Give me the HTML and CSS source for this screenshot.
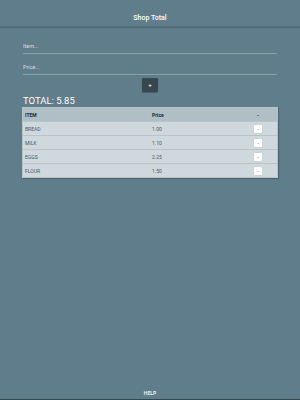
FILE: index.html
```html
<!DOCTYPE html>
<html>
<head>
<meta charset="utf-8">
<link rel="stylesheet" href="styles.css">
</head>
<body>
<div class="app">
  <header class="bar">Shop Total</header>
  <main class="content">
    <div class="field"><input class="inp" placeholder="Item..."></div>
    <div class="field"><input class="inp" placeholder="Price..."></div>
    <div class="add-row"><button class="add">+</button></div>
    <div class="total">TOTAL: 5.85</div>
    <div class="table">
      <div class="row head"><span class="c1">ITEM</span><span class="c2">Price</span><span class="c3">-</span></div>
      <div class="row"><span class="c1">BREAD</span><span class="c2">1.00</span><span class="c3"><button class="rm">-</button></span></div>
      <div class="row"><span class="c1">MILK</span><span class="c2">1.10</span><span class="c3"><button class="rm">-</button></span></div>
      <div class="row"><span class="c1">EGGS</span><span class="c2">2.25</span><span class="c3"><button class="rm">-</button></span></div>
      <div class="row"><span class="c1">FLOUR</span><span class="c2">1.50</span><span class="c3"><button class="rm">-</button></span></div>
    </div>
  </main>
  <footer class="foot">HELP</footer>
</div>
</body>
</html>
```
FILE: styles.css
```css
html, body {
  margin: 0;
  padding: 0;
  background: #607d8b;
  font-family: Roboto, "Liberation Sans", sans-serif;
}
.app {
  height: 400px;
  display: flex;
  flex-direction: column;
  box-sizing: border-box;
  border-bottom: 1px solid #37474f;
}
.bar {
  height: 27px;
  box-sizing: border-box;
  display: flex;
  align-items: center;
  justify-content: center;
  color: #fff;
  font-size: 7px;
  font-weight: 500;
  border-bottom: 1px solid #546e7a;
  box-shadow: 0 1px 1px rgba(0,0,0,0.15);
  padding-top: 9px;
}
.content {
  padding: 6px 23px 0;
  display: flex;
  flex-direction: column;
}
.field {
  height: 20px;
  border-bottom: 1px solid #8a9fa9;
  display: flex;
  align-items: flex-end;
}
.inp {
  background: transparent;
  border: 0;
  outline: none;
  padding: 0 0 4px 0;
  width: 100%;
  font-family: Roboto, "Liberation Sans", sans-serif;
  font-size: 5.5px;
  color: #fff;
}
.inp::placeholder {
  color: #d4dde1;
}
.add-row {
  display: flex;
  justify-content: center;
  margin-top: 3px;
}
.add {
  width: 16px;
  height: 14px;
  background: #37474f;
  border: 0;
  border-radius: 1px;
  color: #fff;
  font-size: 6px;
  font-weight: bold;
  padding: 0;
  line-height: 14px;
  box-shadow: 0 1px 1px rgba(0,0,0,0.25);
}
.total {
  color: #fff;
  font-size: 9.5px;
  margin-top: 3px;
  line-height: 12px;
  height: 12px;
}
.table {
  margin: 0 -1px;
  background: #cfd8dc;
  box-shadow: 1px 1px 1px rgba(0,0,0,0.2);
  border: 1px solid #b7c4ca;
}
.row {
  display: flex;
  align-items: center;
  height: 14px;
  box-sizing: border-box;
  border-top: 1px solid #b8c4ca;
  font-size: 5px;
  color: #4a5a62;
}
.row.head {
  border-top: 0;
  height: 13px;
  background: #b0bec5;
  color: #1f2a30;
  font-weight: bold;
}
.c1 { width: 127px; padding-left: 2px; }
.c2 { width: 96px; }
.c3 { width: 20px; display: flex; justify-content: center; }
.rm {
  width: 8px;
  height: 8px;
  padding: 0;
  border: 0;
  border-radius: 1px;
  background: #fff;
  color: #37474f;
  font-size: 5px;
  line-height: 8px;
  box-shadow: 0 0 1px rgba(0,0,0,0.2);
}
.foot {
  margin-top: auto;
  text-align: center;
  color: #eceff1;
  font-size: 5px;
  font-weight: bold;
  padding-bottom: 3px;
}
```
